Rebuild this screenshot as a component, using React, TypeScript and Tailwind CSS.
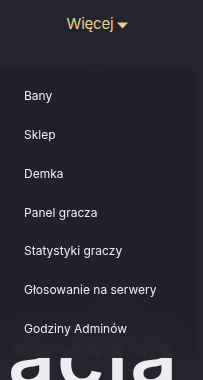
import React from "react";

const items = [
  "Bany",
  "Sklep",
  "Demka",
  "Panel gracza",
  "Statystyki graczy",
  "Głosowanie na serwery",
  "Godziny Adminów",
];

export default function App() {
  return (
    <div
      className="relative w-[203px] h-[380px] overflow-hidden bg-[#24242f]"
      style={{ fontFamily: "Inter, 'Noto Sans', sans-serif" }}
    >
      <div className="h-[46px] flex items-center justify-center gap-[4px] pr-[8px] pt-[3px]">
        <span className="text-[15px] text-[#e6cf8a] tracking-[-0.2px]">Więcej</span>
        <svg width="11" height="7" viewBox="0 0 11 7" className="mt-[1px]">
          <path d="M0 0.5 H11 L5.5 6.5 Z" fill="#e6cf8a" />
        </svg>
      </div>
      <div className="mt-[270px] pl-[8px] text-[82px] leading-none font-semibold text-[#eeeef2] tracking-[2px]">
        acja
      </div>
      <div className="absolute left-0 top-[69px] w-[196px]">
        <div className="absolute left-[90px] -top-[7px] w-0 h-0 border-l-[7px] border-r-[7px] border-b-[7px] border-l-transparent border-r-transparent border-b-[#23212b]/95" />
        <div className="h-[289px] rounded-r-[8px] rounded-bl-[4px] bg-[#23212b]/95 backdrop-blur-md flex flex-col pt-[17px]">
          {items.map((t) => (
            <div
              key={t}
              className="h-[40px] pl-[24px] text-[12px] text-[#ececf0] leading-[20px]"
            >
              {t}
            </div>
          ))}
        </div>
      </div>
    </div>
  );
}
